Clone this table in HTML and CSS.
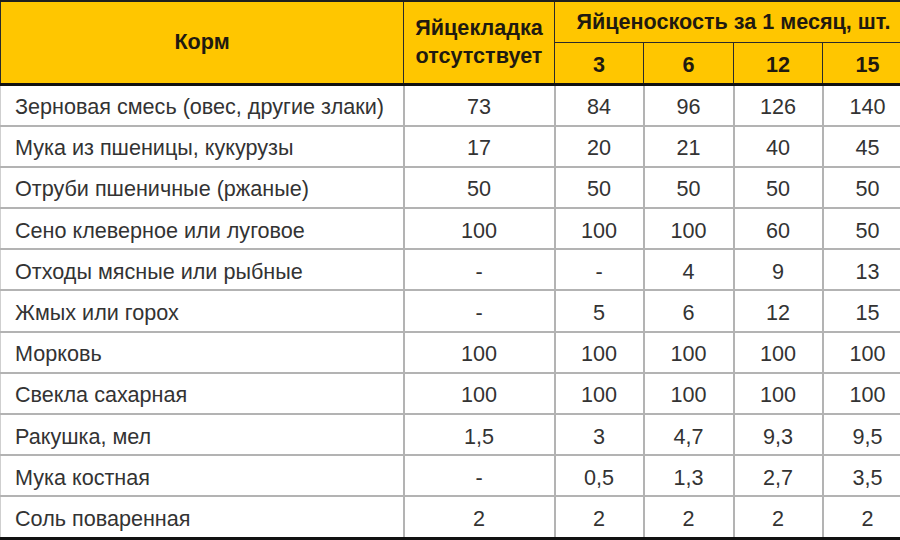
FILE: index.html
```html
<!DOCTYPE html>
<html lang="ru">
<head>
<meta charset="utf-8">
<link rel="stylesheet" href="styles.css">
</head>
<body>
<div class="wrap">
<table class="feed">
<colgroup>
<col class="c-name"><col class="c-none"><col class="c-n1"><col class="c-n2"><col class="c-n3"><col class="c-n4">
</colgroup>
<thead>
<tr class="h1">
<th rowspan="2" class="th-name">Корм</th>
<th rowspan="2" class="th-none">Яйцекладка<br>отсутствует</th>
<th colspan="4" class="th-group">Яйценоскость за 1 месяц, шт.</th>
</tr>
<tr class="h2">
<th>3</th><th>6</th><th>12</th><th>15</th>
</tr>
</thead>
<tbody>
<tr><td>Зерновая смесь (овес, другие злаки)</td><td>73</td><td>84</td><td>96</td><td>126</td><td>140</td></tr>
<tr><td>Мука из пшеницы, кукурузы</td><td>17</td><td>20</td><td>21</td><td>40</td><td>45</td></tr>
<tr><td>Отруби пшеничные (ржаные)</td><td>50</td><td>50</td><td>50</td><td>50</td><td>50</td></tr>
<tr><td>Сено клеверное или луговое</td><td>100</td><td>100</td><td>100</td><td>60</td><td>50</td></tr>
<tr><td>Отходы мясные или рыбные</td><td>-</td><td>-</td><td>4</td><td>9</td><td>13</td></tr>
<tr><td>Жмых или горох</td><td>-</td><td>5</td><td>6</td><td>12</td><td>15</td></tr>
<tr><td>Морковь</td><td>100</td><td>100</td><td>100</td><td>100</td><td>100</td></tr>
<tr><td>Свекла сахарная</td><td>100</td><td>100</td><td>100</td><td>100</td><td>100</td></tr>
<tr><td>Ракушка, мел</td><td>1,5</td><td>3</td><td>4,7</td><td>9,3</td><td>9,5</td></tr>
<tr><td>Мука костная</td><td>-</td><td>0,5</td><td>1,3</td><td>2,7</td><td>3,5</td></tr>
<tr><td>Соль поваренная</td><td>2</td><td>2</td><td>2</td><td>2</td><td>2</td></tr>
</tbody>
</table>
</div>
</body>
</html>
```
FILE: styles.css
```css
html, body {
  margin: 0;
  padding: 0;
  background: #ffffff;
  overflow: hidden;
}
.wrap {
  width: 900px;
  height: 540px;
  overflow: hidden;
}
.feed {
  width: 912px;
  table-layout: fixed;
  border-collapse: collapse;
  font-family: "Liberation Sans", Arial, sans-serif;
  font-size: 21.6px;
  color: #333333;
}
.c-name { width: 403px; }
.c-none { width: 151px; }
.c-n1 { width: 89px; }
.c-n2 { width: 90px; }
.c-n3 { width: 89px; }
.c-n4 { width: 90px; }
.feed thead {
  background: #ffc600;
  border-top: 2px solid #1e1e1e;
  border-bottom: 3px solid #111111;
}
.feed th {
  font-weight: bold;
  color: #1f1a10;
  border: 1px solid #2a2a2a;
  text-align: center;
  vertical-align: middle;
  padding: 0;
  line-height: 28px;
}
.feed thead .h1 th { border-top: 2px solid #1e1e1e; }
.feed thead .h2 th {
  border-bottom: 3px solid #111111;
  padding-top: 4px;
}
.th-name, .th-none { border-bottom: 3px solid #111111; }
.h1 { height: 41px; }
.h2 { height: 42px; }
.th-none { padding-top: 2px; }
.feed td {
  border: 2px solid #b3b3b3;
  text-align: center;
  vertical-align: middle;
  padding: 4px 0 0 0;
  height: 35.2px;
  line-height: 22px;
}
.feed td:first-child {
  text-align: left;
  padding-left: 14px;
  border-left: 1px solid #cfcfcf;
}
.feed tbody tr:last-child td {
  border-bottom: 4px solid #111111;
}
```
